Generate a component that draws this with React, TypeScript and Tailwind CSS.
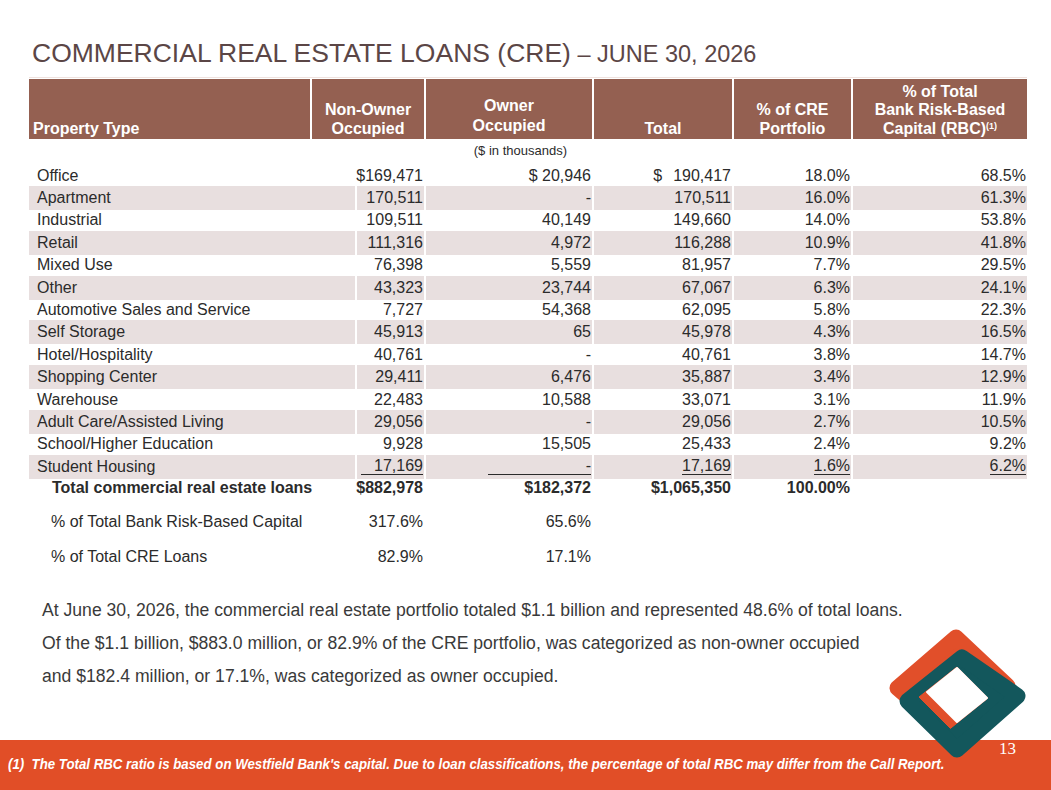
import React from "react";

type Row = {
  label: string;
  a: React.ReactNode;
  b: React.ReactNode;
  c: React.ReactNode;
  d: React.ReactNode;
  e: React.ReactNode;
};

const U = ({ children, w }: { children: React.ReactNode; w?: string }) => (
  <span className={`inline-block border-b border-[#2b2b2b] leading-[16px] text-right ${w ?? ""}`}>{children}</span>
);

const rows: Row[] = [
  { label: "Office", a: "$169,471", b: "$ 20,946", c: (<><span>$</span><span className="ml-[11px]">190,417</span></>), d: "18.0%", e: "68.5%" },
  { label: "Apartment", a: "170,511", b: "-", c: "170,511", d: "16.0%", e: "61.3%" },
  { label: "Industrial", a: "109,511", b: "40,149", c: "149,660", d: "14.0%", e: "53.8%" },
  { label: "Retail", a: "111,316", b: "4,972", c: "116,288", d: "10.9%", e: "41.8%" },
  { label: "Mixed Use", a: "76,398", b: "5,559", c: "81,957", d: "7.7%", e: "29.5%" },
  { label: "Other", a: "43,323", b: "23,744", c: "67,067", d: "6.3%", e: "24.1%" },
  { label: "Automotive Sales and Service", a: "7,727", b: "54,368", c: "62,095", d: "5.8%", e: "22.3%" },
  { label: "Self Storage", a: "45,913", b: "65", c: "45,978", d: "4.3%", e: "16.5%" },
  { label: "Hotel/Hospitality", a: "40,761", b: "-", c: "40,761", d: "3.8%", e: "14.7%" },
  { label: "Shopping Center", a: "29,411", b: "6,476", c: "35,887", d: "3.4%", e: "12.9%" },
  { label: "Warehouse", a: "22,483", b: "10,588", c: "33,071", d: "3.1%", e: "11.9%" },
  { label: "Adult Care/Assisted Living", a: "29,056", b: "-", c: "29,056", d: "2.7%", e: "10.5%" },
  { label: "School/Higher Education", a: "9,928", b: "15,505", c: "25,433", d: "2.4%", e: "9.2%" },
  {
    label: "Student Housing",
    a: <U w="w-[62px]">17,169</U>,
    b: <U w="w-[103px]">-</U>,
    c: <U>17,169</U>,
    d: <U>1.6%</U>,
    e: <U>6.2%</U>,
  },
];

function BodyRow({ r, striped }: { r: Row; striped: boolean }) {
  const cell = striped
    ? "my-[1px] flex items-center justify-end pr-[1px] bg-[#e8dfdf]"
    : "my-[1px] flex items-center justify-end pr-[1px]";
  const labelCls = striped
    ? "my-[1px] flex items-center pl-[8px] bg-[#e8dfdf]"
    : "my-[1px] flex items-center pl-[8px]";
  return (
    <div className="ml-[29px] grid h-[22.4px] grid-cols-[326px_67px_166px_138px_117px_174px] gap-x-[2px]">
      <div className={labelCls}>{r.label}</div>
      <div className={cell}>{r.a}</div>
      <div className={cell}>{r.b}</div>
      <div className={cell}>{r.c}</div>
      <div className={cell}>{r.d}</div>
      <div className={cell}>{r.e}</div>
    </div>
  );
}

function Logo() {
  const orange = "#e14f2a";
  const teal = "#13575c";
  return (
    <svg
      className="absolute left-[880px] top-[620px]"
      width="160"
      height="150"
      viewBox="0 0 160 150"
    >
      {/* orange rounded rhombus */}
      <polygon
        points="76,17.5 127.5,66 75,117.5 17.5,68"
        fill={orange}
        stroke={orange}
        strokeWidth="16"
        strokeLinejoin="round"
      />
      {/* teal rounded rhombus on top */}
      <polygon
        points="82,37.5 137.5,76 77,129.5 27.5,81"
        fill={teal}
        stroke={teal}
        strokeWidth="16"
        strokeLinejoin="round"
      />
      {/* opening of the teal ring: orange band visible inside */}
      <polygon
        points="77,47 108,78 70.4,108.4 39,77"
        fill={orange}
        stroke={orange}
        strokeWidth="1"
        strokeLinejoin="round"
      />
      {/* white centre */}
      <polygon
        points="77,48 107,78 77,102 47,72"
        fill="#ffffff"
        stroke="#ffffff"
        strokeWidth="2"
        strokeLinejoin="round"
      />
    </svg>
  );
}

export default function App() {
  return (
    <div
      className="relative flex h-[790px] w-[1051px] flex-col overflow-hidden bg-white text-[#2b2b2b]"
      style={{ fontFamily: '"Liberation Sans", Arial, sans-serif' }}
    >
      {/* Title */}
      <div className="ml-[32px] mt-[38px] h-[30px] whitespace-nowrap text-[26.5px] leading-[30px] text-[#5b4646]">
        <span>COMMERCIAL REAL ESTATE LOANS (CRE)</span>
        <span className="text-[23.5px]"> – JUNE 30, 2026</span>
      </div>

      <div className="ml-[29px] mt-[9px] h-px w-[998px] bg-[#efe2de]" />

      {/* Header */}
      <div className="ml-[29px] mt-px grid h-[60px] grid-cols-[281px_112px_166px_138px_117px_174px] gap-x-[2px] text-[16px] font-bold leading-[18.5px] text-white">
        <div className="flex flex-col justify-end bg-[#946051] pb-[1px] pl-[4px] text-left">Property Type</div>
        <div className="flex flex-col justify-end bg-[#946051] pb-[1px] text-center">
          <span>Non-Owner</span>
          <span>Occupied</span>
        </div>
        <div className="flex flex-col justify-end bg-[#946051] pb-[3px] text-center leading-[20px]">
          <span>Owner</span>
          <span>Occupied</span>
        </div>
        <div className="flex flex-col justify-end bg-[#946051] pb-[1px] text-center">Total</div>
        <div className="flex flex-col justify-end bg-[#946051] pb-[1px] text-center">
          <span>% of CRE</span>
          <span>Portfolio</span>
        </div>
        <div className="flex flex-col justify-end bg-[#946051] pb-[1px] text-center">
          <span>% of Total</span>
          <span>Bank Risk-Based</span>
          <span>
            Capital (RBC)<sup className="text-[9px]">(1)</sup>
          </span>
        </div>
      </div>

      {/* units */}
      <div className="ml-[29px] grid h-[23.6px] grid-cols-[326px_67px_166px_138px_117px_174px] gap-x-[2px] text-[13px]">
        <div />
        <div />
        <div className="flex items-center justify-end pr-[25px]">($ in thousands)</div>
      </div>

      <div className="text-[16px]">
        {rows.map((r, i) => (
          <BodyRow key={r.label} r={r} striped={i % 2 === 1} />
        ))}

        <div className="ml-[29px] grid h-[22.4px] grid-cols-[326px_67px_166px_138px_117px_174px] gap-x-[2px] font-bold">
          <div className="flex items-center pl-[23px]">Total commercial real estate loans</div>
          <div className="flex items-center justify-end pr-[1px]">$882,978</div>
          <div className="flex items-center justify-end pr-[1px]">$182,372</div>
          <div className="flex items-center justify-end pr-[1px]">$1,065,350</div>
          <div className="flex items-center justify-end pr-[1px]">100.00%</div>
          <div />
        </div>

        <div className="ml-[29px] mt-[12px] grid h-[22.4px] grid-cols-[326px_67px_166px_138px_117px_174px] gap-x-[2px]">
          <div className="flex items-center pl-[22px]">% of Total Bank Risk-Based Capital</div>
          <div className="flex items-center justify-end pr-[1px]">317.6%</div>
          <div className="flex items-center justify-end pr-[1px]">65.6%</div>
        </div>

        <div className="ml-[29px] mt-[12px] grid h-[22.4px] grid-cols-[326px_67px_166px_138px_117px_174px] gap-x-[2px]">
          <div className="flex items-center pl-[22px]">% of Total CRE Loans</div>
          <div className="flex items-center justify-end pr-[1px]">82.9%</div>
          <div className="flex items-center justify-end pr-[1px]">17.1%</div>
        </div>
      </div>

      {/* Paragraph */}
      <div className="ml-[42px] mt-[27px] text-[17.6px] leading-[33px] text-[#3a3a3a]">
        <p>At June 30, 2026, the commercial real estate portfolio totaled $1.1 billion and represented 48.6% of total loans.</p>
        <p>Of the $1.1 billion, $883.0 million, or 82.9% of the CRE portfolio, was categorized as non-owner occupied</p>
        <p>and $182.4 million, or 17.1%, was categorized as owner occupied.</p>
      </div>

      {/* Footer */}
      <div className="mt-auto flex h-[50px] items-start bg-[#e14e27] text-white">
        <div className="mt-[12px] pl-[8px]">
          <span className="inline-block origin-left scale-x-[0.884] whitespace-nowrap text-[15px] font-bold italic leading-[18px]">
            (1)&nbsp; The Total RBC ratio is based on Westfield Bank's capital. Due to loan classifications, the percentage of total RBC may differ from the Call Report.
          </span>
        </div>
      </div>

      <Logo />

      <div
        className="absolute left-[999px] top-[739px] text-[17px] leading-[20px] text-white"
        style={{ fontFamily: '"Liberation Serif", "Times New Roman", serif' }}
      >
        13
      </div>
    </div>
  );
}
